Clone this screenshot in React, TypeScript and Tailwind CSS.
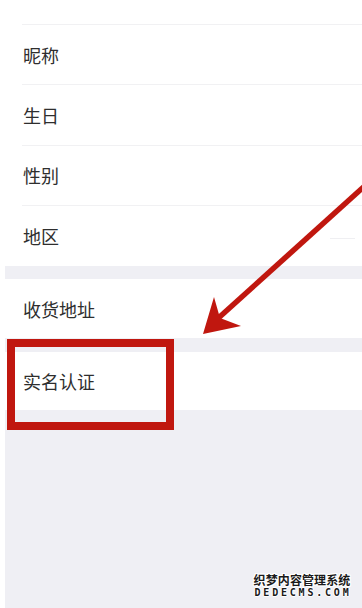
import React from "react";

const font = { fontFamily: '"Noto Sans CJK SC", "Noto Sans", sans-serif' };

interface RowProps {
  label: string;
  divider?: boolean;
  height: string;
  trailing?: React.ReactNode;
}

const Row = ({ label, divider = true, height, trailing }: RowProps) => (
  <div className={`ml-[22px] flex items-center justify-between ${height} ${divider ? "border-b border-[#f1f1f3]" : ""}`}>
    <span className="pl-[1px] text-[18px] leading-none text-[#2e2e2e]">{label}</span>
    {trailing}
  </div>
);

const Arrow = () => (
  <svg className="pointer-events-none absolute left-0 top-0" width="362" height="608" viewBox="0 0 362 608">
    <line x1="368" y1="183" x2="214" y2="322" stroke="#c0170f" strokeWidth="5.5" strokeLinecap="butt" />
    <polygon points="203,334 214,297 220,318 241,326" fill="#c0170f" />
  </svg>
);

const Watermark = () => (
  <div className="pointer-events-none absolute left-[252px] top-[573px] flex w-[100px] flex-col items-center">
    <span
      className="text-[12px] font-bold leading-[14px] tracking-[0.1px] text-[#1a1a1a] [text-shadow:1px_0_#fff,-1px_0_#fff,0_1px_#fff,0_-1px_#fff,1px_1px_#fff,-1px_-1px_#fff,1px_-1px_#fff,-1px_1px_#fff]"
      style={font}
    >
      织梦内容管理系统
    </span>
    <span
      className="mt-[1px] pl-[2px] text-[10px] font-bold leading-[10px] tracking-[2.8px] text-[#1a1a1a] [text-shadow:1px_0_#fff,-1px_0_#fff,0_1px_#fff,0_-1px_#fff]"
      style={{ fontFamily: '"DejaVu Sans Mono", monospace' }}
    >
      DEDECMS.COM
    </span>
  </div>
);

export default function App() {
  return (
    <div className="relative flex h-[608px] w-[362px] flex-col overflow-hidden bg-white" style={font}>
      <div className="ml-[22px] h-[25px] border-b border-[#f1f1f3]" />
      <Row label="昵称" height="h-[60.25px]" />
      <Row label="生日" height="h-[60.25px]" />
      <Row label="性别" height="h-[60.25px]" />
      <Row
        label="地区"
        divider={false}
        height="h-[60.25px]"
        trailing={<div className="mr-[7px] mt-[5px] h-px w-[25px] bg-[#efeff2]" />}
      />
      <div className="ml-[5px] h-[13px] bg-[#efeff4]" />
      <Row label="收货地址" divider={false} height="h-[59px]" />
      <div className="ml-[5px] h-[14px] bg-[#efeff4]" />
      <Row label="实名认证" divider={false} height="h-[58px]" />
      <div className="ml-[5px] flex-1 bg-[#efeff4]" />

      <div className="pointer-events-none absolute left-[7px] top-[339px] h-[91px] w-[167px] border-[8px] border-[#c0170f]" />
      <Arrow />
      <Watermark />
    </div>
  );
}
